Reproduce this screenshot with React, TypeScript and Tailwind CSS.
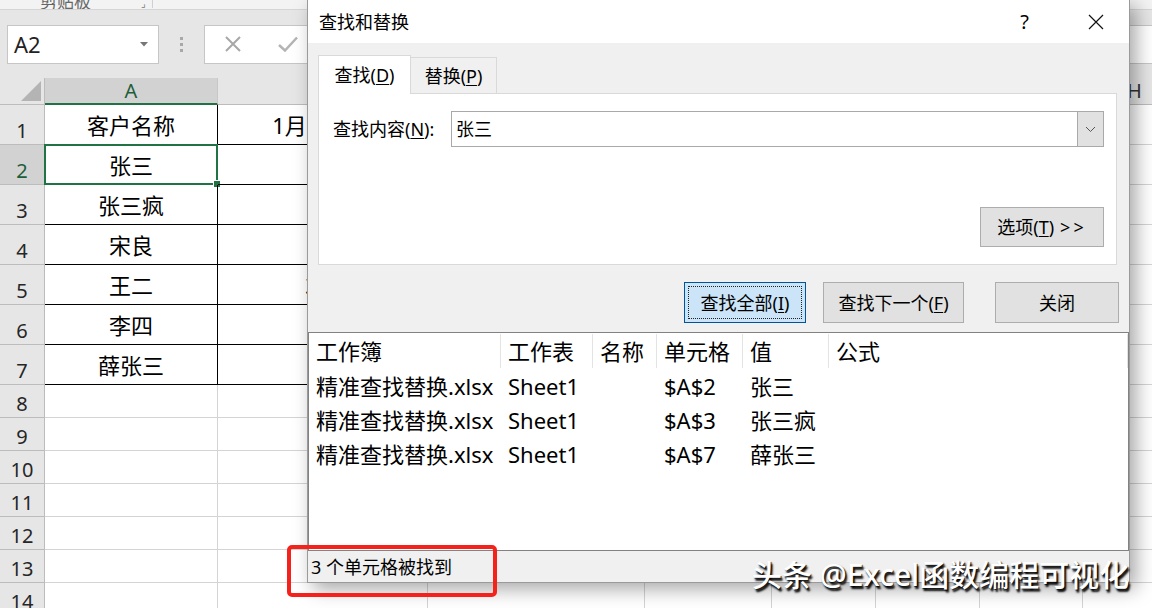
import React from "react";

const colW = [
  "w-[173px]",
  "w-[210px]",
  "w-[217px]",
  "w-[127px]",
  "w-[104px]",
  "w-[104px]",
  "w-[103px]",
  "w-[104px]",
];
const colNames = ["A", "B", "C", "D", "E", "F", "G", "H"];

const names = ["客户名称", "张三", "张三疯", "宋良", "王二", "李四", "薛张三"];
const sales = ["1月销售额", "1200", "1500", "800", "3000", "1800", "1000"];

const results = [
  ["精准查找替换.xlsx", "Sheet1", "", "$A$2", "张三", ""],
  ["精准查找替换.xlsx", "Sheet1", "", "$A$3", "张三疯", ""],
  ["精准查找替换.xlsx", "Sheet1", "", "$A$7", "薛张三", ""],
];
const listW = [
  "w-[192px]",
  "w-[92px]",
  "w-[64px]",
  "w-[86px]",
  "w-[86px]",
  "w-[299px]",
];
const listHead = ["工作簿", "工作表", "名称", "单元格", "值", "公式"];

function SheetRow({ n }: { n: number }) {
  const tall = n <= 7;
  const sel = n === 2;
  return (
    <div className={`flex shrink-0 ${tall ? "h-[40px]" : "h-[33px]"}`}>
      <div
        className={`w-[45px] shrink-0 flex items-end justify-center pb-[3px] text-[20px] leading-[20px] border-r border-b border-[#bcbcbc] ${
          sel ? "bg-[#d2d2d2] text-[#1e5e3b]" : "bg-[#e6e6e6] text-[#262626]"
        }`}
      >
        {n}
      </div>
      {colNames.map((c, i) => {
        const boxed = tall && i < 2;
        const num = tall && i === 1 && n > 1;
        return (
          <div
            key={c}
            className={`${colW[i]} shrink-0 relative flex items-center justify-center text-[22px] leading-none text-black border-r border-b ${
              boxed ? "border-black" : "border-[#d4d4d4]"
            } ${num ? "pl-[16px]" : ""}`}
          >
            {tall && i === 0 ? names[n - 1] : null}
            {tall && i === 1 ? sales[n - 1] : null}
            {sel && i === 0 ? (
              <div className="absolute -left-px -top-px -right-px -bottom-px border-2 border-[#217346]">
                <div className="absolute -right-[5px] -bottom-[5px] w-[8px] h-[8px] bg-[#217346] border border-white" />
              </div>
            ) : null}
          </div>
        );
      })}
    </div>
  );
}

function FindDialog() {
  return (
    <div className="absolute left-[307px] top-0 w-[823px] h-[583px] flex flex-col bg-[#f0f0f0] border-x border-b border-[#9a9a9a] shadow-[6px_6px_18px_rgba(0,0,0,0.35)] text-black leading-none">
      <div className="h-[43px] shrink-0 bg-white flex items-center pl-[11px] pr-[25px] text-[18px]">
        <span>查找和替换</span>
        <span className="ml-auto text-[20px] leading-none">?</span>
        <svg className="ml-[59px]" width="16" height="16" viewBox="0 0 16 16">
          <path d="M1 1 L15 15 M15 1 L1 15" stroke="#111" strokeWidth="1.2" />
        </svg>
      </div>

      <div className="pt-[12px] pl-[10px] flex items-end h-[50px] shrink-0">
        <div className="relative z-10 -mb-px h-[39px] w-[93px] flex items-center justify-center bg-white border border-b-0 border-[#d9d9d9] text-[18px]">
          查找(<u className="underline-offset-2">D</u>)
        </div>
        <div className="h-[36px] w-[86px] flex items-center justify-center border-t border-r border-[#d9d9d9] text-[18px]">
          替换(<u className="underline-offset-2">P</u>)
        </div>
      </div>

      <div className="ml-[10px] w-[799px] h-[172px] shrink-0 bg-white border border-[#d9d9d9] flex flex-col pt-[17px] pl-[14px] pr-[12px]">
        <div className="flex items-center h-[36px]">
          <div className="w-[118px] shrink-0 text-[18px] whitespace-nowrap">
            查找内容(<u className="underline-offset-2">N</u>):
          </div>
          <div className="flex-1 h-[36px] flex border border-[#a9a9a9]">
            <div className="flex-1 flex items-center pl-[4px] text-[18px]">张三</div>
            <div className="w-[26px] bg-[#e1e1e1] border-l border-[#a9a9a9] flex items-center justify-center">
              <svg width="11" height="7" viewBox="0 0 11 7">
                <path d="M1 1 L5.5 5.5 L10 1" fill="none" stroke="#555" strokeWidth="1" />
              </svg>
            </div>
          </div>
        </div>
        <div className="mt-[60px] self-end w-[124px] h-[40px] bg-[#e1e1e1] border border-[#adadad] flex items-center justify-center text-[18px]">
          选项(<u className="underline-offset-2">T</u>) <span className="ml-[6px] tracking-[3px]">&gt;&gt;</span>
        </div>
      </div>

      <div className="mt-[17px] h-[41px] shrink-0 flex pl-[376px]">
        <div className="w-[122px] h-[41px] p-[3px] bg-[#cce4f7] border border-[#005499]">
          <div className="w-full h-full border border-dotted border-[#222] flex items-center justify-center text-[18px]">
            查找全部(<u className="underline-offset-2">I</u>)
          </div>
        </div>
        <div className="ml-[17px] w-[141px] h-[41px] bg-[#e1e1e1] border border-[#adadad] flex items-center justify-center text-[18px]">
          查找下一个(<u className="underline-offset-2">F</u>)
        </div>
        <div className="ml-[31px] w-[124px] h-[41px] bg-[#e1e1e1] border border-[#adadad] flex items-center justify-center text-[18px]">
          关闭
        </div>
      </div>

      <div className="mt-[9px] h-[219px] shrink-0 bg-white border border-[#828282] flex flex-col">
        <div className="flex h-[36px] shrink-0">
          {listHead.map((h, i) => (
            <div key={h} className={`${listW[i]} shrink-0 flex items-center pl-[7px] text-[22px]`}>
              <span className="flex-1">{h}</span>
              <span className="w-px h-[34px] bg-[#e3e3e3]" />
            </div>
          ))}
        </div>
        {results.map((r, ri) => (
          <div key={ri} className="flex h-[34px] shrink-0">
            {r.map((v, i) => (
              <div key={i} className={`${listW[i]} shrink-0 flex items-center pl-[7px] text-[22px] whitespace-nowrap`}>
                {v}
              </div>
            ))}
          </div>
        ))}
      </div>

      <div className="h-[31px] shrink-0 flex items-center pl-[3px] text-[18px]">3 个单元格被找到</div>
    </div>
  );
}

export default function App() {
  const rows = Array.from({ length: 14 }, (_, i) => i + 1);
  return (
    <div className="relative w-[1152px] h-[608px] overflow-hidden bg-white font-['Noto_Sans','Noto_Sans_CJK_SC',sans-serif]">
      <div className="h-[10px] bg-[#f3f3f3] border-b border-[#d5d5d5] overflow-hidden flex items-start">
        <span className="ml-[40px] -mt-[11px] text-[17px] text-[#666]">剪贴板</span>
        <span className="ml-[50px] -mt-[4px] text-[10px] text-[#777]">⌟</span>
        <span className="ml-[6px] w-px h-[8px] bg-[#d0d0d0]" />
      </div>

      <div className="h-[68px] bg-[#e6e6e6] flex items-center">
        <div className="ml-[7px] w-[152px] h-[39px] bg-white border border-[#c6c6c6] flex items-center pl-[6px] pr-[10px]">
          <span className="text-[22px] text-[#222]">A2</span>
          <svg className="ml-auto" width="8" height="5" viewBox="0 0 8 5">
            <path d="M0 0 L8 0 L4 4.5 Z" fill="#777" />
          </svg>
        </div>
        <div className="w-[45px] flex flex-col items-center gap-[3px]">
          <span className="w-[3px] h-[3px] bg-[#a8a8a8]" />
          <span className="w-[3px] h-[3px] bg-[#a8a8a8]" />
          <span className="w-[3px] h-[3px] bg-[#a8a8a8]" />
        </div>
        <div className="flex-1 h-[39px] bg-white border border-r-0 border-[#c6c6c6] flex items-center pl-[20px]">
          <svg width="16" height="16" viewBox="0 0 16 16">
            <path d="M1 1 L15 15 M15 1 L1 15" stroke="#a8a8a8" strokeWidth="2" />
          </svg>
          <svg className="ml-[37px]" width="20" height="16" viewBox="0 0 20 16">
            <path d="M1 9 L7 14.5 L19 1.5" fill="none" stroke="#b4b4b4" strokeWidth="2.5" />
          </svg>
        </div>
      </div>

      <div className="flex h-[27px] bg-[#e6e6e6]">
        <div className="w-[45px] shrink-0 flex items-end justify-end pr-[3px] pb-[3px] border-r border-b border-[#bcbcbc]">
          <svg width="20" height="20" viewBox="0 0 20 20">
            <path d="M20 0 L20 20 L0 20 Z" fill="#b4b4b4" />
          </svg>
        </div>
        {colNames.map((c, i) => (
          <div
            key={c}
            className={`${colW[i]} shrink-0 flex items-center justify-center text-[20px] border-r border-[#c8c8c8] ${
              i === 0
                ? "bg-[#d2d2d2] text-[#1e5e3b] border-b-2 border-b-[#217346]"
                : "text-[#333] border-b border-b-[#bcbcbc]"
            }`}
          >
            {c}
          </div>
        ))}
      </div>

      {rows.map((n) => (
        <SheetRow key={n} n={n} />
      ))}

      <FindDialog />

      <div className="absolute left-[287px] top-[545px] w-[210px] h-[52px] border-[4px] border-[#f5221b] rounded-[5px]" />

      <div className="absolute left-[752px] top-[553px] text-[30px] leading-[44px] font-medium text-white whitespace-nowrap [text-shadow:2px_3px_2px_rgba(0,0,0,0.95),1px_1px_1px_rgba(0,0,0,0.8)]">
        头条 @Excel函数编程可视化
      </div>
    </div>
  );
}
